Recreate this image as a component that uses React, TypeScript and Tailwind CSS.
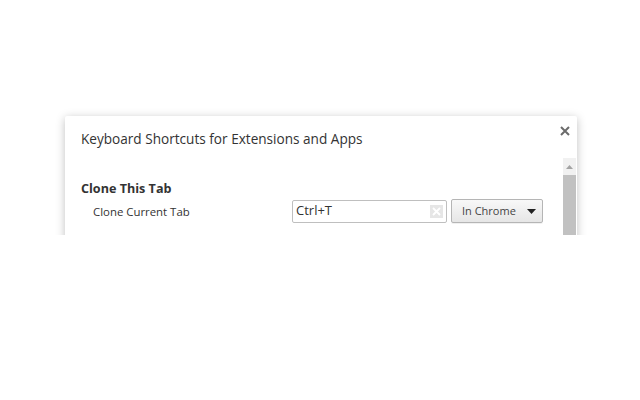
export default function App() {
  return (
    <div
      className="w-[640px] h-[400px] bg-white overflow-hidden"
      style={{ fontFamily: '"Open Sans", "Noto Sans", sans-serif' }}
    >
      <div className="h-[235px] overflow-hidden pt-[116px] pl-[65px]">
        <div className="w-[512px] h-[200px] bg-white rounded-[2px] shadow-[0_2px_10px_rgba(0,0,0,0.25)] flex flex-col">
          <div className="flex items-start justify-between pl-[16px] pr-[7px] pt-[10px]">
            <h1 className="text-[13.6px] leading-[18px] text-[#333] mt-[4px]">
              Keyboard Shortcuts for Extensions and Apps
            </h1>
            <button className="text-[#777]">
              <svg width="10" height="10" viewBox="0 0 10 10">
                <path d="M1 1L9 9M9 1L1 9" stroke="#6b6b6b" strokeWidth="2" />
              </svg>
            </button>
          </div>
          <div className="flex flex-1 mt-[10px]">
            <div className="flex-1 pl-[16px] pt-[22px]">
              <h2 className="text-[12.6px] leading-[18px] font-bold text-[#333]">Clone This Tab</h2>
              <div className="flex items-center mt-[1px]">
                <span className="pl-[12px] w-[211px] text-[11.4px] text-[#333] pt-[1px]">Clone Current Tab</span>
                <div className="w-[155px] h-[23px] border border-[#bfbfbf] rounded-[2px] flex items-center justify-between pl-[3px] pr-[3px]">
                  <span className="text-[13px] text-[#333]">Ctrl+T</span>
                  <span className="w-[13px] h-[13px] bg-[#e6e6e6] flex items-center justify-center">
                    <svg width="9" height="9" viewBox="0 0 9 9">
                      <path d="M1 1L8 8M8 1L1 8" stroke="#fff" strokeWidth="1.8" />
                    </svg>
                  </span>
                </div>
                <div className="ml-[4px] w-[92px] h-[24px] border border-[#b5b5b5] rounded-[2px] bg-gradient-to-b from-[#f8f8f8] to-[#e6e6e6] flex items-center justify-between pl-[10px] pr-[6px] shadow-[0_1px_0_rgba(0,0,0,0.06)]">
                  <span className="text-[11px] text-[#444]">In Chrome</span>
                  <svg width="9" height="5" viewBox="0 0 9 5">
                    <path d="M0 0H9L4.5 5Z" fill="#222" />
                  </svg>
                </div>
              </div>
            </div>
            <div className="w-[13px] mr-[1px] flex flex-col bg-[#f1f1f1]">
              <div className="h-[17px] flex items-center justify-center">
                <svg width="7" height="4" viewBox="0 0 7 4">
                  <path d="M0 4H7L3.5 0Z" fill="#a3a3a3" />
                </svg>
              </div>
              <div className="flex-1 bg-[#c1c1c1]" />
            </div>
          </div>
        </div>
      </div>
    </div>
  );
}
